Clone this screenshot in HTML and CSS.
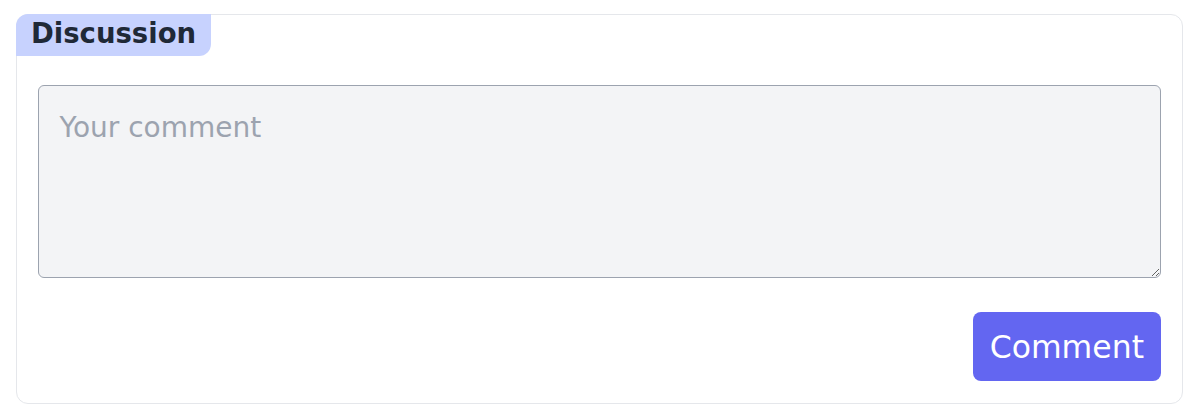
FILE: index.html
```html
<!DOCTYPE html>
<html lang="en">
<head>
    <meta charset="UTF-8">
    <meta name="viewport" content="width=device-width, initial-scale=1.0">
    <title>Discussion</title>
    <link rel="stylesheet" href="styles.css">
</head>
<body>
    <div class="card">
        <div class="card-tab">Discussion</div>
        <form class="comment-form">
            <textarea name="comment" placeholder="Your comment"></textarea>
            <div class="actions">
                <button type="submit" class="btn-comment">Comment</button>
            </div>
        </form>
    </div>
</body>
</html>
```

FILE: styles.css
```css
body {
    margin: 0;
    padding: 0;
    background-color: white;
    font-family: "DejaVu Sans", sans-serif;
}

.card {
    margin: 14px 17px 0 16px;
    border: 1px solid #e5e7eb;
    border-radius: 12px;
    display: flex;
    flex-direction: column;
}

.card-tab {
    align-self: flex-start;
    margin: -1px 0 0 -1px;
    padding: 0 15px 4px 15px;
    line-height: 38px;
    font-size: 27.5px;
    font-weight: bold;
    color: #1f2937;
    background-color: #c7d2fe;
    border-top-left-radius: 12px;
    border-bottom-right-radius: 12px;
}

.comment-form {
    padding: 29px 21px 22px 21px;
}

textarea {
    display: block;
    box-sizing: border-box;
    width: 100%;
    height: 193px;
    margin: 0;
    padding: 20.5px 20.5px;
    font-family: "DejaVu Sans", sans-serif;
    font-size: 28px;
    line-height: 1.5;
    color: #1f2937;
    background-color: #f3f4f6;
    border: 1.5px solid #9ca3af;
    border-radius: 6px;
}

textarea::placeholder {
    color: #9ca3af;
}

.actions {
    display: flex;
    justify-content: flex-end;
    margin-top: 34px;
}

.btn-comment {
    height: 69px;
    padding: 0 17px;
    font-family: "DejaVu Sans", sans-serif;
    font-size: 31.5px;
    color: white;
    background-color: #6366f1;
    border: none;
    border-radius: 8px;
    cursor: pointer;
}
```
